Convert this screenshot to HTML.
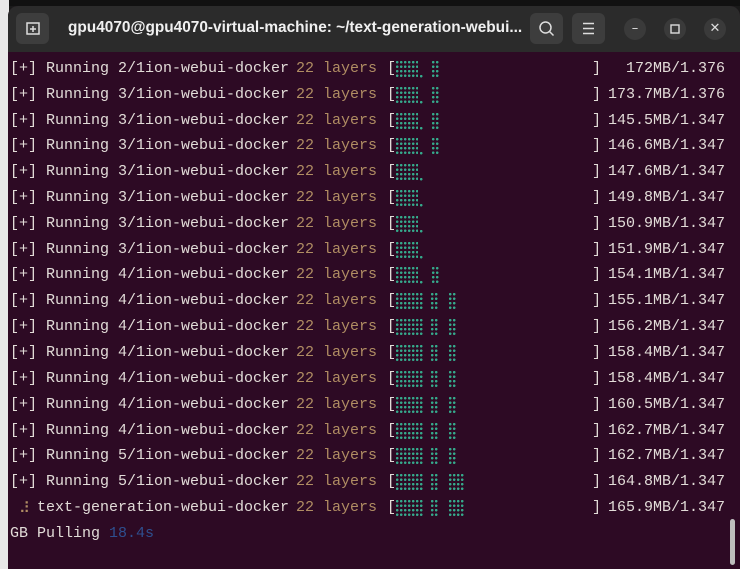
<!DOCTYPE html>
<html><head><meta charset="utf-8"><style>
*{margin:0;padding:0;box-sizing:border-box}
body{width:740px;height:569px;overflow:hidden;background:#1a1a1a;position:relative;font-family:"Liberation Mono","DejaVu Sans Mono",monospace}
#leftedge{position:absolute;left:0;top:0;width:9px;height:569px;background:#e8e8e8}
#topedge{position:absolute;left:0;top:0;width:740px;height:6px;background:#111}
#win{position:absolute;left:8px;top:6px;width:732px;height:563px;background:#2d0a24;border-radius:10px 10px 0 0;overflow:hidden}
#title{position:absolute;left:0;top:0;width:732px;height:46px;background:#2b2b2b}
.btn{position:absolute;top:7px;width:33px;height:31px;border-radius:6px;background:#3d3d3d}
.cbtn{position:absolute;top:12px;width:22px;height:22px;border-radius:50%;background:#3a3a3a;color:#ddd;font:13px "DejaVu Sans",sans-serif;text-align:center;line-height:22px}
#tt{position:absolute;left:60px;top:13px;color:#f0f0f0;font:bold 15.4px "Liberation Sans","DejaVu Sans",sans-serif;white-space:nowrap}
.r{position:absolute;left:0;width:740px;height:26px;font-size:15px;line-height:26px;color:#e2dcd8;white-space:pre}
.r>span{position:absolute;top:0}
.l{color:#b08d63}
.d{position:absolute;top:5px;height:18px;background:radial-gradient(circle at 1.2px 1.2px,#35a98b 1.1px,transparent 1.5px) 0 0/4px 4.5px}
.d1{width:3px;height:3px;top:18.5px}
.c4{width:22px}.c5{width:27px}.c2{width:7px}.c4b{width:15px}
.sz{right:15px}
#sb{position:absolute;left:730px;top:519px;width:5px;height:46px;border-radius:3px;background:#bdbdbd}
</style></head><body>
<div id="topedge"></div><div id="leftedge"></div>
<div id="win">
<div id="title">
<div class="btn" style="left:8px"><svg width="33" height="31"><rect x="11" y="10" width="12" height="11" fill="none" stroke="#ddd" stroke-width="1.5"/><path d="M17 13v6M14 16h6" stroke="#ddd" stroke-width="1.5"/></svg></div>
<div id="tt">gpu4070@gpu4070-virtual-machine: ~/text-generation-webui...</div>
<div class="btn" style="left:522px"><svg width="33" height="31"><circle cx="15.5" cy="14.5" r="5.5" fill="none" stroke="#ddd" stroke-width="1.5"/><path d="M19.5 18.5l4 4" stroke="#ddd" stroke-width="1.5"/></svg></div>
<div class="btn" style="left:564px"><svg width="33" height="31"><path d="M11 10.5h11M11 15.5h11M11 20.5h11" stroke="#ddd" stroke-width="1.5"/></svg></div>
<div class="cbtn" style="left:616px">–</div>
<div class="cbtn" style="left:656px"><svg width="22" height="22"><rect x="7" y="7" width="8" height="8" fill="none" stroke="#ddd" stroke-width="1.4"/></svg></div>
<div class="cbtn" style="left:696px">✕</div>
</div>
</div>
<div class="r" style="top:56px"><span style="left:10px">[+] Running 2/1ion-webui-docker</span><span class="l" style="left:296px">22 layers</span><span style="left:387px">[</span><i class="d c4" style="left:396px"></i><i class="d d1" style="left:420px"></i><i class="d c2" style="left:432px"></i><span style="left:592px">]</span><span class="sz">172MB/1.376</span></div>
<div class="r" style="top:82px"><span style="left:10px">[+] Running 3/1ion-webui-docker</span><span class="l" style="left:296px">22 layers</span><span style="left:387px">[</span><i class="d c4" style="left:396px"></i><i class="d d1" style="left:420px"></i><i class="d c2" style="left:432px"></i><span style="left:592px">]</span><span class="sz">173.7MB/1.376</span></div>
<div class="r" style="top:108px"><span style="left:10px">[+] Running 3/1ion-webui-docker</span><span class="l" style="left:296px">22 layers</span><span style="left:387px">[</span><i class="d c4" style="left:396px"></i><i class="d d1" style="left:420px"></i><i class="d c2" style="left:432px"></i><span style="left:592px">]</span><span class="sz">145.5MB/1.347</span></div>
<div class="r" style="top:133px"><span style="left:10px">[+] Running 3/1ion-webui-docker</span><span class="l" style="left:296px">22 layers</span><span style="left:387px">[</span><i class="d c4" style="left:396px"></i><i class="d d1" style="left:420px"></i><i class="d c2" style="left:432px"></i><span style="left:592px">]</span><span class="sz">146.6MB/1.347</span></div>
<div class="r" style="top:159px"><span style="left:10px">[+] Running 3/1ion-webui-docker</span><span class="l" style="left:296px">22 layers</span><span style="left:387px">[</span><i class="d c4" style="left:396px"></i><i class="d d1" style="left:420px"></i><span style="left:592px">]</span><span class="sz">147.6MB/1.347</span></div>
<div class="r" style="top:185px"><span style="left:10px">[+] Running 3/1ion-webui-docker</span><span class="l" style="left:296px">22 layers</span><span style="left:387px">[</span><i class="d c4" style="left:396px"></i><i class="d d1" style="left:420px"></i><span style="left:592px">]</span><span class="sz">149.8MB/1.347</span></div>
<div class="r" style="top:211px"><span style="left:10px">[+] Running 3/1ion-webui-docker</span><span class="l" style="left:296px">22 layers</span><span style="left:387px">[</span><i class="d c4" style="left:396px"></i><i class="d d1" style="left:420px"></i><span style="left:592px">]</span><span class="sz">150.9MB/1.347</span></div>
<div class="r" style="top:237px"><span style="left:10px">[+] Running 3/1ion-webui-docker</span><span class="l" style="left:296px">22 layers</span><span style="left:387px">[</span><i class="d c4" style="left:396px"></i><i class="d d1" style="left:420px"></i><span style="left:592px">]</span><span class="sz">151.9MB/1.347</span></div>
<div class="r" style="top:262px"><span style="left:10px">[+] Running 4/1ion-webui-docker</span><span class="l" style="left:296px">22 layers</span><span style="left:387px">[</span><i class="d c4" style="left:396px"></i><i class="d d1" style="left:420px"></i><i class="d c2" style="left:432px"></i><span style="left:592px">]</span><span class="sz">154.1MB/1.347</span></div>
<div class="r" style="top:288px"><span style="left:10px">[+] Running 4/1ion-webui-docker</span><span class="l" style="left:296px">22 layers</span><span style="left:387px">[</span><i class="d c5" style="left:396px"></i><i class="d c2" style="left:431px"></i><i class="d c2" style="left:449px"></i><span style="left:592px">]</span><span class="sz">155.1MB/1.347</span></div>
<div class="r" style="top:314px"><span style="left:10px">[+] Running 4/1ion-webui-docker</span><span class="l" style="left:296px">22 layers</span><span style="left:387px">[</span><i class="d c5" style="left:396px"></i><i class="d c2" style="left:431px"></i><i class="d c2" style="left:449px"></i><span style="left:592px">]</span><span class="sz">156.2MB/1.347</span></div>
<div class="r" style="top:340px"><span style="left:10px">[+] Running 4/1ion-webui-docker</span><span class="l" style="left:296px">22 layers</span><span style="left:387px">[</span><i class="d c5" style="left:396px"></i><i class="d c2" style="left:431px"></i><i class="d c2" style="left:449px"></i><span style="left:592px">]</span><span class="sz">158.4MB/1.347</span></div>
<div class="r" style="top:366px"><span style="left:10px">[+] Running 4/1ion-webui-docker</span><span class="l" style="left:296px">22 layers</span><span style="left:387px">[</span><i class="d c5" style="left:396px"></i><i class="d c2" style="left:431px"></i><i class="d c2" style="left:449px"></i><span style="left:592px">]</span><span class="sz">158.4MB/1.347</span></div>
<div class="r" style="top:392px"><span style="left:10px">[+] Running 4/1ion-webui-docker</span><span class="l" style="left:296px">22 layers</span><span style="left:387px">[</span><i class="d c5" style="left:396px"></i><i class="d c2" style="left:431px"></i><i class="d c2" style="left:449px"></i><span style="left:592px">]</span><span class="sz">160.5MB/1.347</span></div>
<div class="r" style="top:418px"><span style="left:10px">[+] Running 4/1ion-webui-docker</span><span class="l" style="left:296px">22 layers</span><span style="left:387px">[</span><i class="d c5" style="left:396px"></i><i class="d c2" style="left:431px"></i><i class="d c2" style="left:449px"></i><span style="left:592px">]</span><span class="sz">162.7MB/1.347</span></div>
<div class="r" style="top:443px"><span style="left:10px">[+] Running 5/1ion-webui-docker</span><span class="l" style="left:296px">22 layers</span><span style="left:387px">[</span><i class="d c5" style="left:396px"></i><i class="d c2" style="left:431px"></i><i class="d c2" style="left:449px"></i><span style="left:592px">]</span><span class="sz">162.7MB/1.347</span></div>
<div class="r" style="top:469px"><span style="left:10px">[+] Running 5/1ion-webui-docker</span><span class="l" style="left:296px">22 layers</span><span style="left:387px">[</span><i class="d c5" style="left:396px"></i><i class="d c2" style="left:431px"></i><i class="d c4b" style="left:449px"></i><span style="left:592px">]</span><span class="sz">164.8MB/1.347</span></div>
<div class="r" style="top:495px"><span style="left:19px;color:#b08d63;font-family:'DejaVu Sans Mono',monospace">⠼</span><span style="left:37px">text-generation-webui-docker</span><span class="l" style="left:296px">22 layers</span><span style="left:387px">[</span><i class="d c5" style="left:396px"></i><i class="d c2" style="left:431px"></i><i class="d c4b" style="left:449px"></i><span style="left:592px">]</span><span class="sz">165.9MB/1.347</span></div>
<div class="r" style="top:521px"><span style="left:10px">GB Pulling</span><span style="left:109px;color:#2e4f8f">18.4s</span></div>
<div id="sb"></div>
</body></html>
